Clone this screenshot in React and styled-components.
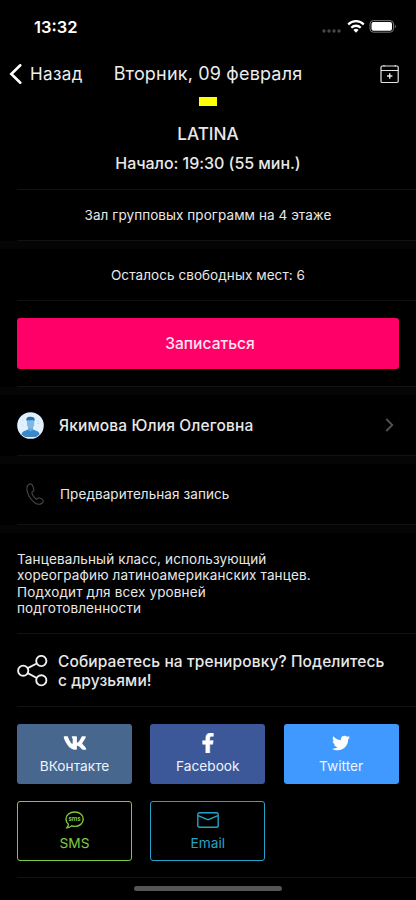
import styled, { createGlobalStyle } from "styled-components";
import { FaVk, FaFacebookF, FaTwitter } from "react-icons/fa";

const GlobalStyle = createGlobalStyle`
  * {
    box-sizing: border-box;
  }

  body {
    margin: 0;
    background: #000;
    font-family: Inter, "Noto Sans", sans-serif;
  }
`;

const Screen = styled.main`
  position: relative;
  width: 416px;
  height: 900px;
  overflow: hidden;
  background: #000;
  color: #e8e8e8;
`;

const StatusBar = styled.div`
  height: 54px;
  padding: 0 19px 0 34px;
  display: flex;
  align-items: center;
  justify-content: space-between;
`;

const Time = styled.span`
  color: #fff;
  font-size: 16.5px;
  font-weight: 600;
  line-height: 20px;
`;

const Header = styled.header`
  height: 40px;
  padding: 0 16px 0 9px;
  display: grid;
  grid-template-columns: 90px 1fr 83px;
  align-items: center;
`;

const Back = styled.button`
  display: flex;
  align-items: center;
  gap: 8px;
  padding: 0;
  border: none;
  background: none;
  color: #f0f0f0;
  font-family: inherit;
  font-size: 17px;
  line-height: 22px;
  letter-spacing: 0.4px;
`;

const Date = styled.h1`
  margin: 0;
  color: #ececec;
  text-align: center;
  white-space: nowrap;
  font-size: 18px;
  font-weight: 400;
  line-height: 22px;
  letter-spacing: 0.18px;
`;

const CalendarButton = styled.button`
  justify-self: end;
  display: flex;
  padding: 0;
  border: none;
  background: none;
`;

const Summary = styled.section`
  height: 95px;
  padding-top: 3px;
  display: flex;
  flex-direction: column;
  align-items: center;
`;

const Mark = styled.div`
  width: 18px;
  height: 9px;
  background: #ff0;
`;

const ClassName = styled.h2`
  margin: 17px 0 0;
  font-size: 17.2px;
  font-weight: 450;
  line-height: 22px;
`;

const Start = styled.p`
  margin: 8px 0 0;
  font-size: 16px;
  font-weight: 500;
  line-height: 20px;
  letter-spacing: -0.04px;
`;

const Divider = styled.hr`
  height: 1px;
  margin: 0 0 0 17px;
  border: none;
  background: #111213;
`;

const Band = styled.div`
  height: 8px;
  background: #050505;
`;

const InfoRow = styled.div`
  height: ${(p) => p.$height}px;
  display: flex;
  align-items: center;
  justify-content: center;
  font-size: 13.5px;
  letter-spacing: 0.07px;
`;

const Action = styled.div`
  padding: 17px;
`;

const SignUp = styled.button`
  display: block;
  width: 382px;
  height: 51px;
  padding: 0 0 1px 4px;
  border: none;
  border-radius: 3px;
  background: #ff0068;
  color: #ffe5ef;
  font-family: inherit;
  font-size: 15.6px;
  font-weight: 500;
`;

const Trainer = styled.div`
  height: 60px;
  padding: 0 22px 0 17px;
  display: flex;
  align-items: center;
`;

const TrainerName = styled.span`
  flex: 1;
  margin-left: 15px;
  font-size: 15.5px;
  font-weight: 500;
  letter-spacing: 0.15px;
`;

const Booking = styled.div`
  height: 60px;
  padding-left: 26px;
  display: flex;
  align-items: center;
  gap: 16px;
  font-size: 13.5px;
  letter-spacing: 0.08px;
`;

const Description = styled.p`
  height: 100px;
  margin: 0;
  padding: 18px 0 0 17px;
  font-size: 13.5px;
  line-height: 16.4px;
  letter-spacing: 0.14px;
  white-space: pre-line;
`;

const Share = styled.div`
  height: 72px;
  padding: 1px 0 0 17px;
  display: flex;
  align-items: center;
  gap: 10px;
`;

const ShareText = styled.p`
  margin: 0;
  padding-top: 1px;
  font-size: 15.5px;
  font-weight: 500;
  line-height: 19px;
  letter-spacing: 0.11px;
  white-space: pre-line;
`;

const ShareGrid = styled.div`
  padding: 17px 17px 16px;
  display: grid;
  grid-template-columns: repeat(3, 115px);
  grid-auto-rows: 60px;
  gap: 17px 18.3px;
`;

const ShareButton = styled.button`
  display: flex;
  flex-direction: column;
  align-items: center;
  padding: 0;
  border: ${(p) => (p.$outline ? `1px solid ${p.$outline}` : "none")};
  border-radius: 3px;
  background: ${(p) => p.$fill || "transparent"};
  color: ${(p) => p.$color || "#eef4ff"};
  font-family: inherit;
  font-size: 13.7px;
  line-height: 18px;
`;

const IconBox = styled.span`
  height: ${(p) => (p.$outlined ? 32 : 33)}px;
  padding-top: ${(p) => (p.$outlined ? 3 : 5)}px;
  display: flex;
  align-items: center;
`;

const HomeIndicator = styled.div`
  position: absolute;
  left: 134px;
  bottom: 9px;
  width: 148px;
  height: 5px;
  border-radius: 3px;
  background: #555;
`;

const StatusIcons = () => (
  <svg width="75" height="16" viewBox="0 0 75 16" fill="none">
    <g fill="#48484a">
      <circle cx="2" cy="12" r="1.7" />
      <circle cx="7" cy="12" r="1.7" />
      <circle cx="12" cy="12" r="1.7" />
      <circle cx="17" cy="12" r="1.7" />
    </g>
    <g stroke="#fff" strokeWidth="2.3">
      <path d="M26.2 5.500a10.800 10.800 0 0 1 15.600 0" />
      <path d="M29.300 8.700a6.600 6.600 0 0 1 9.400 0" />
    </g>
    <path d="M31.400 11a3.700 3.700 0 0 1 5.200 0L34 13.700Z" fill="#fff" />
    <rect x="48" y="1.600" width="23.500" height="11.600" rx="3.400" stroke="#77777a" />
    <rect x="49.500" y="3.100" width="20.500" height="8.600" rx="2" fill="#fff" />
    <path d="M72.800 5.500v4c1.400-.6 1.400-3.400 0-4Z" fill="#77777a" />
  </svg>
);

const BackIcon = () => (
  <svg width="13" height="20" viewBox="0 0 13 20" fill="none">
    <path d="M11.300 1.300 2.300 10l9 8.700" stroke="#fff" strokeWidth="2.600" strokeLinecap="round" />
  </svg>
);

const CalendarIcon = () => (
  <svg width="20" height="20" viewBox="0 0 20 20" fill="none" stroke="#e4e4e4" strokeWidth="1.200">
    <rect x="1" y="2" width="17.200" height="16.500" rx="1.200" />
    <path d="M1 6.500h17.200M4 1v1.500M15.300 1v1.500" />
    <path d="M9.700 9.300v5.400M7 12h5.400" strokeWidth="1.400" />
  </svg>
);

const Avatar = () => (
  <svg width="27" height="27" viewBox="0 0 27 27">
    <defs>
      <clipPath id="face">
        <circle cx="13.500" cy="13.500" r="12.600" />
      </clipPath>
    </defs>
    <circle cx="13.500" cy="13.500" r="13.300" fill="#e0f1fd" />
    <g clipPath="url(#face)">
      <path d="M4 25c.3-4 1.400-5.400 4.200-6.300l3.300-1.400h4l3.500 1.400c2.800.9 3.800 2.300 4 6.300Z" fill="#3c87c8" />
      <path d="M11.200 14H16v3.800l-2.400 1.800-2.400-1.800Z" fill="#67a9dc" />
      <path d="M10 8h7.200v4.500c0 2-1.600 4-3.600 4s-3.600-2-3.600-4Z" fill="#7db9e7" />
      <path d="M9.800 9.500 9.300 6.700c1-1.800 3-2.300 4.500-1.900 2 0 3.600.7 3.900 2.200l-.5 2.500-.8-1.500c-2 .5-4 .4-5.800 0Z" fill="#2870ad" />
    </g>
    <path d="m5.700 13 .8.8m-1-5 .8-.7M20.800 12l.9-1.200m-1-2 .8.5" stroke="#8ebfe3" strokeWidth=".7" />
  </svg>
);

const ChevronIcon = () => (
  <svg width="9" height="14" viewBox="0 0 9 14" fill="none">
    <path d="m1.300 1 6 6-6 6" stroke="#515153" strokeWidth="1.800" />
  </svg>
);

const PhoneIcon = () => (
  <svg width="18" height="22" viewBox="0 0 18 22" fill="none">
    <path
      d="M5.600 1.300C4.500.4 3 .9 2 2.200-.5 5.500 1.500 11.500 5 16c3.400 4.300 7.600 6.300 10.600 4.500 1.300-.8 2-2.100 1.300-3.200-.5-.8-2.700-2.300-3.700-2.500-1.300-.2-1.700 1.500-2.800 1.300-1.500-.4-4.800-5-4.500-6.600.2-1 2-.9 2-2.200 0-1.200-1.100-5.100-2.300-6Z"
      stroke="#484848"
      strokeWidth="1.100"
    />
  </svg>
);

const ShareIcon = () => (
  <svg width="31" height="32" viewBox="0 0 31 32" fill="none" stroke="#f0f0f0" strokeWidth="1.900">
    <circle cx="6.200" cy="15.700" r="5.100" />
    <circle cx="24.300" cy="6" r="5.100" />
    <circle cx="24.300" cy="25.300" r="5.100" />
    <path d="m10.700 13.200 9.100-4.700m-9.100 9.700 9.100 4.800" />
  </svg>
);

const SmsIcon = () => (
  <svg width="19" height="18" viewBox="0 0 19 18" fill="none">
    <path
      d="M9.700 1C4.700 1 1 3.900 1 8.200c0 2.200 1 3.900 2.400 5-.1 1.500-.7 2.500-1.500 3.500 2 0 3.600-.7 4.600-1.800 1 .3 2 .5 3.200.5 4.900 0 8.500-3 8.500-7.200S14.600 1 9.700 1Z"
      stroke="#7fc941"
      strokeWidth="1.400"
    />
    <text x="9.600" y="10.200" textAnchor="middle" fontSize="6" fontWeight="700" fill="#7fc941">
      sms
    </text>
  </svg>
);

const MailIcon = () => (
  <svg width="22" height="16" viewBox="0 0 22 16" fill="none" stroke="#26a2c8" strokeWidth="1.400">
    <rect x=".8" y=".8" width="20.400" height="14.400" rx="1.800" />
    <path d="m1.200 3.700 8.700 3.600c.8.3 1.400.3 2.200 0l8.700-3.600" />
  </svg>
);

const networks = [
  { name: "ВКонтакте", fill: "#47678f", icon: <FaVk size={24} color="#fff" /> },
  { name: "Facebook", fill: "#3c5898", icon: <FaFacebookF size={20} color="#fff" stroke="#fff" strokeWidth={14} /> },
  { name: "Twitter", fill: "#4099ff", icon: <FaTwitter size={18} color="#fff" /> },
  { name: "SMS", outline: "#7fc941", color: "#7fc941", icon: <SmsIcon /> },
  { name: "Email", outline: "#26a2c8", color: "#26a2c8", icon: <MailIcon /> },
];

const App = () => {
  return (
    <Screen>
      <GlobalStyle />

      <StatusBar>
        <Time>13:32</Time>
        <StatusIcons />
      </StatusBar>

      <Header>
        <Back>
          <BackIcon />
          Назад
        </Back>
        <Date>Вторник, 09 февраля</Date>
        <CalendarButton aria-label="Календарь">
          <CalendarIcon />
        </CalendarButton>
      </Header>

      <Summary>
        <Mark />
        <ClassName>LATINA</ClassName>
        <Start>Начало: 19:30 (55 мин.)</Start>
      </Summary>
      <Divider />

      <InfoRow $height={50}>Зал групповых программ на 4 этаже</InfoRow>
      <Divider />
      <Band />

      <InfoRow $height={51}>Осталось свободных мест: 6</InfoRow>
      <Divider />

      <Action>
        <SignUp>Записаться</SignUp>
      </Action>
      <Divider />
      <Band />

      <Trainer>
        <Avatar />
        <TrainerName>Якимова Юлия Олеговна</TrainerName>
        <ChevronIcon />
      </Trainer>
      <Divider />
      <Band />

      <Booking>
        <PhoneIcon />
        Предварительная запись
      </Booking>
      <Divider />
      <Band />

      <Description>
        {"Танцевальный класс, использующий\nхореографию латиноамериканских танцев.\nПодходит для всех уровней\nподготовленности"}
      </Description>
      <Divider />

      <Share>
        <ShareIcon />
        <ShareText>{"Собираетесь на тренировку? Поделитесь\nс друзьями!"}</ShareText>
      </Share>
      <Divider />

      <ShareGrid>
        {networks.map((n) => (
          <ShareButton key={n.name} $fill={n.fill} $outline={n.outline} $color={n.color}>
            <IconBox $outlined={!!n.outline}>{n.icon}</IconBox>
            {n.name}
          </ShareButton>
        ))}
      </ShareGrid>
      <Divider />

      <HomeIndicator />
    </Screen>
  );
};

export default App;
